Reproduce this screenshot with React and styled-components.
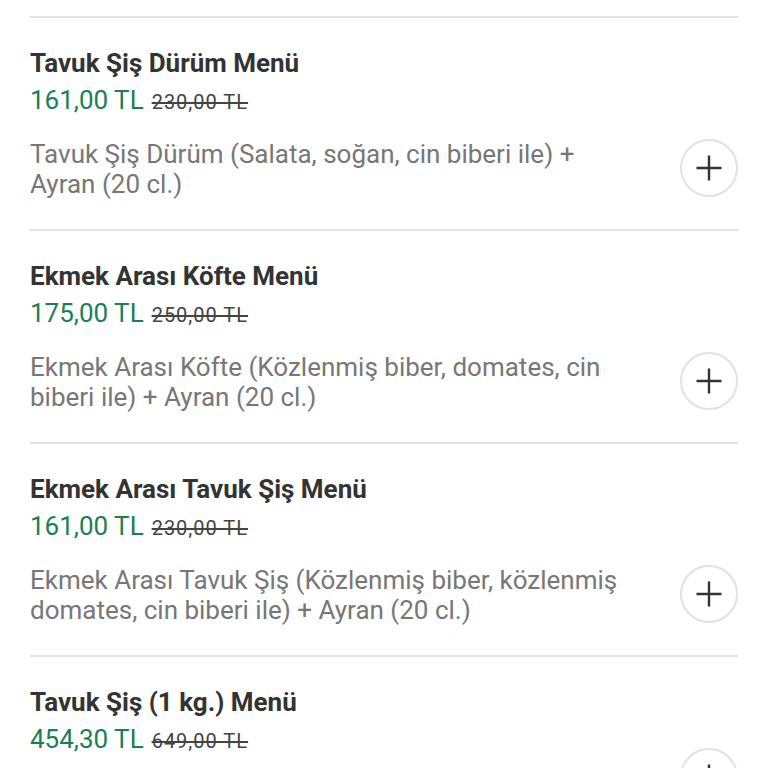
import styled, { createGlobalStyle } from "styled-components";

const GlobalStyle = createGlobalStyle`
  body {
    margin: 0;
    background: #ffffff;
    font-family: Roboto, "Liberation Sans", sans-serif;
    overflow: hidden;
  }
`;

const items = [
  {
    name: "Tavuk Şiş Dürüm Menü",
    price: "161,00 TL",
    old: "230,00 TL",
    desc: "Tavuk Şiş Dürüm (Salata, soğan, cin biberi ile) + Ayran (20 cl.)",
  },
  {
    name: "Ekmek Arası Köfte Menü",
    price: "175,00 TL",
    old: "250,00 TL",
    desc: "Ekmek Arası Köfte (Közlenmiş biber, domates, cin biberi ile) + Ayran (20 cl.)",
  },
  {
    name: "Ekmek Arası Tavuk Şiş Menü",
    price: "161,00 TL",
    old: "230,00 TL",
    desc: "Ekmek Arası Tavuk Şiş (Közlenmiş biber, közlenmiş domates, cin biberi ile) + Ayran (20 cl.)",
  },
  {
    name: "Tavuk Şiş (1 kg.) Menü",
    price: "454,30 TL",
    old: "649,00 TL",
    desc: "Tavuk Şiş (1 kg.) + Ayran (20 cl.)",
  },
];

export default function App() {
  return (
    <>
      <GlobalStyle />
      <List>
        {items.map((it, i) => (
          <Item key={i}>
            <Info>
              <Title>{it.name}</Title>
              <PriceRow>
                <Price>{it.price}</Price>
                <OldPrice>{it.old}</OldPrice>
              </PriceRow>
              <Desc>{it.desc}</Desc>
            </Info>
            <AddButton aria-label="Ekle">
              <svg width="28" height="28" viewBox="0 0 28 28">
                <path d="M14 1.5v25M1.5 14h25" stroke="#333" strokeWidth="2.4" fill="none" />
              </svg>
            </AddButton>
          </Item>
        ))}
      </List>
    </>
  );
}

const List = styled.div`
  margin: 16px 30px 0;
`;

const Item = styled.div`
  display: flex;
  align-items: flex-end;
  gap: 44px;
  border-top: 2px solid #e4e4e4;
  padding: 30px 0 30px;
`;

const Info = styled.div`
  flex: 1;
  min-width: 0;
`;

const Title = styled.div`
  font-size: 26px;
  font-weight: 700;
  color: #333333;
  line-height: 30px;
`;

const PriceRow = styled.div`
  display: flex;
  align-items: baseline;
  gap: 8px;
  margin-top: 7px;
  height: 30px;
`;

const Price = styled.span`
  font-size: 26px;
  line-height: 30px;
  color: #1b7f55;
`;

const OldPrice = styled.span`
  font-size: 20px;
  line-height: 20px;
  letter-spacing: 1px;
  color: #444444;
  text-decoration: line-through;
`;

const Desc = styled.div`
  margin-top: 24px;
  font-size: 26px;
  line-height: 30px;
  color: #777777;
`;

const AddButton = styled.button`
  flex: none;
  width: 58px;
  height: 58px;
  margin-bottom: 2px;
  border-radius: 50%;
  border: 2px solid #e2e2e2;
  background: #ffffff;
  display: flex;
  align-items: center;
  justify-content: center;
  padding: 0;
`;
